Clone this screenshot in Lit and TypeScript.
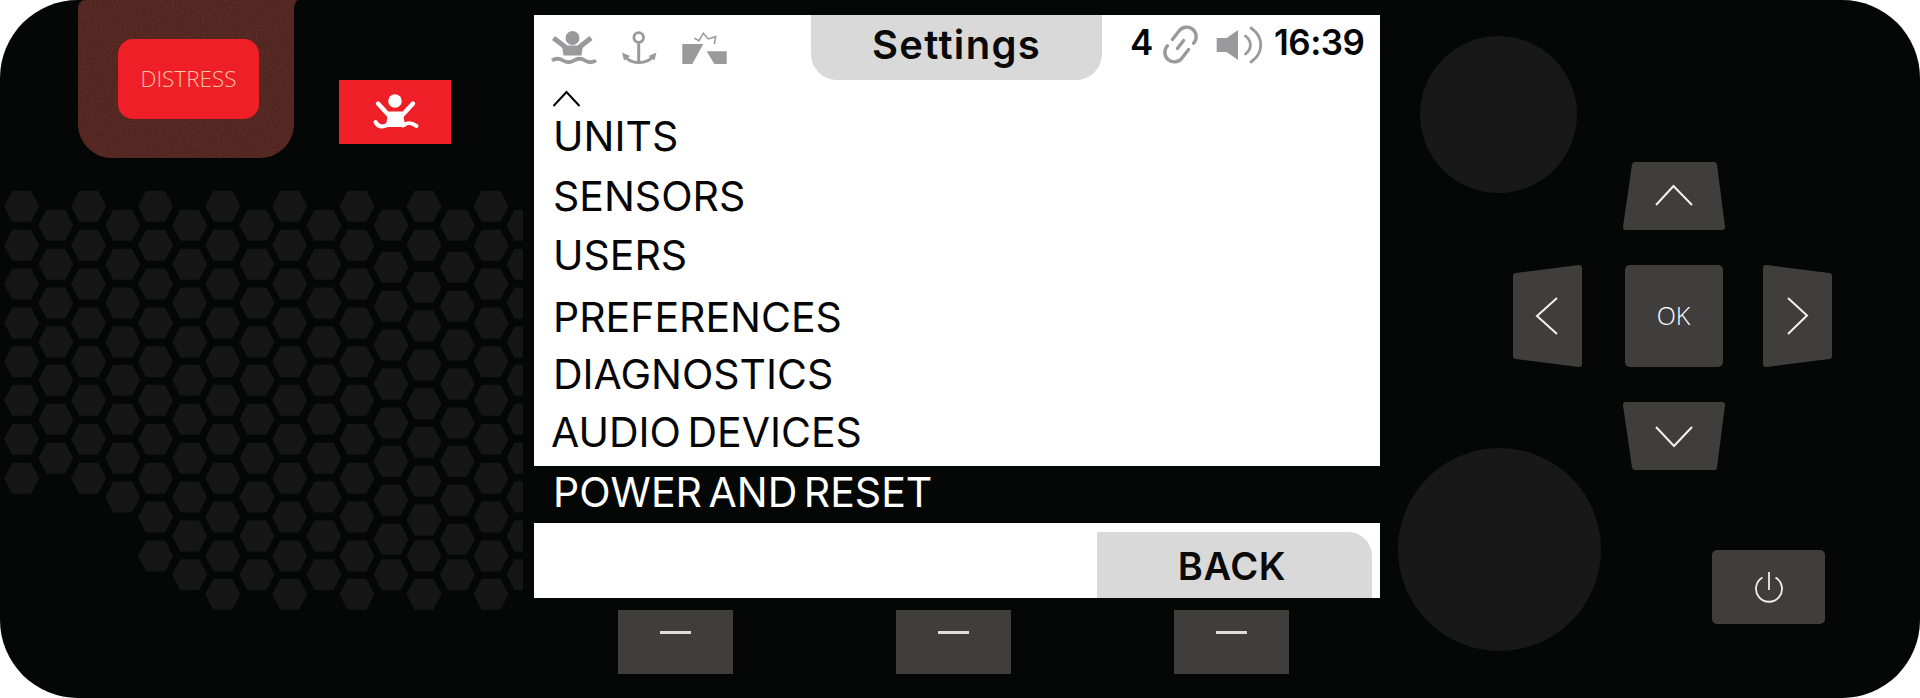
import { LitElement, css, html, svg } from "lit"
import { customElement } from "lit/decorators.js"

// hex grille: column centre x + tops as read from the reference crop (3x, offset 180)
const evenTops = [33, 150, 266, 383, 499, 615, 732, 849, 965, 1082, 1197]
const oddTops = [90, 207, 323, 440, 555, 672, 789, 905, 1022, 1138]
const shiftOdd = [90, 216, 333, 449, 566, 683, 798, 915, 1032, 1138]
const shiftEven = [33, 150, 276, 392, 509, 625, 741, 858, 974, 1081, 1197]

const hexColumns: [number, number[]][] = [
  [21.6, evenTops.slice(0, 8)],
  [55.8, oddTops.slice(0, 7)],
  [88.6, evenTops.slice(0, 8)],
  [122.7, oddTops.slice(0, 8)],
  [155.5, evenTops.slice(0, 10)],
  [189.7, oddTops],
  [222.8, evenTops],
  [257, oddTops],
  [289.7, evenTops],
  [323.9, oddTops],
  [357, evenTops],
  [391, shiftOdd],
  [424, shiftEven],
  [457.4, shiftOdd],
  [491, evenTops],
  [524, oddTops],
]

const hexPoints = (cx: number, top: number) => {
  const cy = (top + 46) / 3
  return [
    [cx - 17.5, cy],
    [cx - 9.4, cy - 15.5],
    [cx + 9.4, cy - 15.5],
    [cx + 17.5, cy],
    [cx + 9.4, cy + 15.5],
    [cx - 9.4, cy + 15.5],
  ]
    .map((p) => p.join(","))
    .join(" ")
}

const menu = [
  { label: "UNITS", shift: -1, indent: 0 },
  { label: "SENSORS", shift: 0, indent: 0 },
  { label: "USERS", shift: 0, indent: 0 },
  { label: "PREFERENCES", shift: 3, indent: 0 },
  { label: "DIAGNOSTICS", shift: 1, indent: 0 },
  { label: "AUDIO DEVICES", shift: -0.5, indent: -2 },
]

@customElement("app-root")
export class AppRoot extends LitElement {
  renderHexes() {
    return html`
      <svg class="grille" viewBox="0 0 523 440">
        ${hexColumns.map(([cx, tops]) =>
          tops.map((t) => svg`<polygon points=${hexPoints(cx, t)} />`)
        )}
      </svg>
    `
  }

  render() {
    return html`
      <div class="panel">
        <section class="left">
          <div class="top-left">
            <div class="tab">
              <svg class="grain">
                <filter id="grain">
                  <feTurbulence type="fractalNoise" baseFrequency="0.55" numOctaves="2" seed="4" />
                  <feColorMatrix values="0 0 0 0 0.13  0 0 0 0 0.04  0 0 0 0 0.03  0 0 0 1.1 -0.35" />
                </filter>
                <rect width="100%" height="100%" filter="url(#grain)" />
              </svg>
              <div class="distress">DISTRESS</div>
            </div>
            <div class="alert">
              <svg viewBox="339 80 112 64">
                <circle cx="395" cy="101" r="6.8" fill="#fff" />
                <path d="M378 103.500 389.500 116M413 103.500 401.500 116" stroke="#fff" stroke-width="4.4" stroke-linecap="round" fill="none" />
                <path d="M388.500 111.500H402.500L405.500 127H385.500Z" fill="#fff" />
                <path d="M375.500 122C378.500 128 384 127 388 124.500M403 125.500C408 121.500 412 123 416.500 126" stroke="#fff" stroke-width="4" stroke-linecap="round" fill="none" />
              </svg>
            </div>
          </div>
          ${this.renderHexes()}
        </section>

        <section class="center">
          <div class="screen">
            <header class="bar">
              <div class="bar-icons">
                <svg class="ico" style="width:48px" viewBox="550 28 48 40">
                  <circle cx="572.500" cy="38" r="7" fill="#9a9a9c" />
                  <path d="M553.500 38 566 47.500M591 38 579 47.500" stroke="#9a9a9c" stroke-width="5" fill="none" />
                  <path d="M562 45.500H583L581.500 55.500H563.500Z" fill="#9a9a9c" />
                  <path d="M552 60.500C556 58 559 58 563 60.500S570 63 574 60.500 581 58 585 60.500 592 63 596 60.500" stroke="#9a9a9c" stroke-width="3.800" fill="none" />
                </svg>
                <svg class="ico" style="width:44px;margin-left:20px" viewBox="618 28 44 40">
                  <circle cx="638.700" cy="37.500" r="4.800" stroke="#9a9a9c" stroke-width="2.800" fill="none" />
                  <path d="M638.700 42V62" stroke="#9a9a9c" stroke-width="3" />
                  <path d="M625 56C628 61 633 62.500 638.700 62.500S650 61 653 56" stroke="#9a9a9c" stroke-width="3" fill="none" />
                  <path d="M622 52.500 630 56 624 60.500ZM656.500 52.500 648.500 56 654.500 60.500Z" fill="#9a9a9c" />
                </svg>
                <svg class="ico" style="width:52px;margin-left:16px" viewBox="678 28 52 40">
                  <path d="M682.300 44H703.300L692.300 64H682.300ZM706.700 51.300H726.700V64H714.300Z" fill="#9a9a9c" />
                  <path d="M694.300 38 699 40.700 703.300 33.300 708.300 39 715.700 36.700 714.300 44" stroke="#9a9a9c" stroke-width="1.500" fill="none" />
                </svg>
              </div>
              <h1 class="title">Settings</h1>
              <div class="status">
                <span class="count">4</span>
                <svg class="ico link" viewBox="1160 24 40 42">
                  <g transform="translate(1180.500 44.500) rotate(-52)" stroke="#9a9a9c" stroke-width="3.400" fill="none" stroke-linecap="round">
                    <path d="M-1-9.500H10A9.500 9.500 0 0 1 10 9.500H9" />
                    <path d="M1 9.500H-10A9.500 9.500 0 0 1-10-9.500H-9" />
                    <path d="M-5 0H5" />
                  </g>
                </svg>
                <svg class="ico speaker" viewBox="1212 24 52 42">
                  <path d="M1216.700 38H1226.700L1238 30V60L1226.700 52H1216.700Z" fill="#9a9a9c" />
                  <path d="M1245.500 36C1252 41 1252 49 1245.500 54" stroke="#9a9a9c" stroke-width="2.800" fill="none" stroke-linecap="round" />
                  <path d="M1251 28C1264 37 1264 53 1251 62" stroke="#9a9a9c" stroke-width="2.800" fill="none" stroke-linecap="round" />
                </svg>
                <span class="time">16:39</span>
              </div>
            </header>
            <svg class="more" viewBox="0 0 30 18">
              <path d="M1.500 16 14.500 2 27.500 16" stroke="#000" stroke-width="2" fill="none" />
            </svg>
            <ul class="list">
              ${menu.map(
                (m) => html`<li style="transform:translate(${m.indent}px,${m.shift}px)">${m.label}</li>`
              )}
            </ul>
          </div>
          <div class="selected">POWER AND RESET</div>
          <div class="foot"><div class="back">BACK</div></div>
          <div class="softkeys">
            <div class="softkey"><span></span></div>
            <div class="softkey"><span></span></div>
            <div class="softkey"><span></span></div>
          </div>
        </section>

        <section class="right">
          <div class="knobs">
            <div class="knob small"></div>
            <div class="knob big"></div>
          </div>
          <div class="controls">
            <div class="dpad">
              <svg class="up" viewBox="1623 162 102 68">
                <polygon class="key" points="1635,165 1714,165 1722,227 1626,227" />
                <polyline class="chev" points="1656,205 1673.500,186 1692,205" />
              </svg>
              <svg class="lf" viewBox="1513 265 69 102">
                <polygon class="key" points="1516,276 1579,268 1579,364 1516,356" />
                <polyline class="chev" points="1557,298 1537,316 1557,334" />
              </svg>
              <div class="ok">OK</div>
              <svg class="rt" viewBox="1763 265 69 102">
                <polygon class="key" points="1766,268 1829,276 1829,356 1766,364" />
                <polyline class="chev" points="1788,298 1807,315.500 1788,334" />
              </svg>
              <svg class="dn" viewBox="1623 402 102 68">
                <polygon class="key" points="1626,405 1722,405 1714,467 1635,467" />
                <polyline class="chev" points="1656,427 1674,446 1692,427" />
              </svg>
            </div>
            <div class="power">
              <svg viewBox="1750 568 38 40">
                <path d="M1762.500 578.500A13 13 0 1 0 1775.500 578.500" stroke="#eee" stroke-width="1.800" fill="none" />
                <path d="M1769 573V591" stroke="#eee" stroke-width="1.800" />
              </svg>
            </div>
          </div>
        </section>
      </div>
    `
  }

  static styles = css`
    :host {
      display: block;
      background: #fff;
    }
    * {
      box-sizing: border-box;
    }
    svg {
      display: block;
    }
    .panel {
      width: 1920px;
      height: 698px;
      border-radius: 78px;
      background: #040706;
      overflow: hidden;
      display: grid;
      grid-template-columns: 534px 846px 540px;
    }

    /* left side */
    .top-left {
      display: flex;
      align-items: flex-start;
    }
    .tab {
      position: relative;
      width: 216px;
      height: 158px;
      margin-left: 78px;
      padding: 39px 0 0 40px;
      background: #50241e;
      border-radius: 8px 0 34px 34px;
    }
    .tab::after {
      content: "";
      position: absolute;
      left: 100%;
      top: 0;
      width: 5px;
      height: 10px;
      background: radial-gradient(ellipse at 100% 100%, transparent 70%, #50241e 72%);
    }
    .grain {
      position: absolute;
      inset: 0;
      width: 100%;
      height: 100%;
      border-radius: inherit;
    }
    .distress {
      position: relative;
      width: 141px;
      height: 80px;
      padding-bottom: 2px;
      border-radius: 15px;
      background: #ee1f26;
      color: #fcc6ac;
      font: 300 22.500px "Open Sans", sans-serif;
      display: flex;
      align-items: center;
      justify-content: center;
    }
    .alert {
      width: 112px;
      height: 64px;
      margin: 80px 0 0 45px;
      background: #ee1f26;
    }
    .grille {
      width: 523px;
      height: 440px;
      margin-top: 22px;
      fill: #161616;
    }

    /* screen */
    .center {
      padding-top: 15px;
      font-family: Inter, sans-serif;
    }
    .screen {
      height: 451px;
      background: #fff;
      color: #060606;
    }
    .bar {
      display: grid;
      grid-template-columns: 277px 291px 278px;
      height: 65px;
    }
    .bar-icons {
      display: flex;
      padding: 13px 0 0 16px;
    }
    .ico {
      height: 40px;
    }
    .title {
      margin: 0;
      background: #d9d9d9;
      border-radius: 0 0 26px 26px;
      font: 600 40px/60px Inter, sans-serif;
      letter-spacing: 1.300px;
      text-align: center;
      color: #0a0a0a;
    }
    .status {
      display: flex;
      align-items: flex-start;
      font: 600 35px/42px Inter, sans-serif;
      padding: 6px 0 0 28px;
    }
    .count {
      width: 30px;
    }
    .status .link {
      width: 40px;
      height: 42px;
      margin-top: 3px;
    }
    .status .speaker {
      width: 52px;
      height: 42px;
      margin: 3px 0 0 12px;
    }
    .time {
      margin-left: 10px;
      letter-spacing: -0.500px;
    }
    .more {
      width: 30px;
      height: 18px;
      margin: 10px 0 0 18px;
    }
    .list {
      list-style: none;
      margin: 0;
      padding: 0 0 0 19px;
      font-size: 41px;
      word-spacing: -5px;
      line-height: 59px;
    }
    .selected {
      height: 57px;
      padding-left: 19px;
      color: #fff;
      font-size: 41px;
      word-spacing: -5px;
      line-height: 52px;
    }
    .foot {
      height: 75px;
      background: #fff;
      display: flex;
      justify-content: flex-end;
      padding: 9px 8px 0 0;
    }
    .back {
      width: 275px;
      padding-right: 5px;
      background: #d9d9d9;
      border-radius: 0 24px 0 0;
      font: 600 38px/68px Inter, sans-serif;
      letter-spacing: 0.600px;
      text-align: center;
      color: #0a0a0a;
    }
    .softkeys {
      display: flex;
      gap: 163px;
      margin: 12px 0 0 84px;
    }
    .softkey {
      width: 115px;
      height: 64px;
      background: #3f3e3c;
      padding-top: 21px;
    }
    .softkey span {
      display: block;
      width: 31px;
      height: 2.500px;
      margin: 0 auto;
      background: #ddd;
    }

    /* right side */
    .right {
      display: grid;
    }
    .right > * {
      grid-area: 1 / 1;
    }
    .knob {
      border-radius: 50%;
      background: #181818;
    }
    .knob.small {
      width: 157px;
      height: 157px;
      margin: 35.500px 0 0 40px;
    }
    .knob.big {
      width: 203px;
      height: 203px;
      margin: 255.500px 0 0 17.500px;
    }
    .dpad {
      display: grid;
      grid-template-columns: 69px 41px 102px 38px 69px;
      grid-template-rows: 68px 102px 68px;
      row-gap: 35px;
      margin: 162px 0 0 133px;
    }
    .up {
      grid-area: 1 / 3;
    }
    .lf {
      grid-area: 2 / 1;
    }
    .rt {
      grid-area: 2 / 5;
    }
    .dn {
      grid-area: 3 / 3;
    }
    .key {
      fill: #3f3e3c;
      stroke: #3f3e3c;
      stroke-width: 6;
      stroke-linejoin: round;
    }
    .chev {
      fill: none;
      stroke: #f2f2f2;
      stroke-width: 2;
    }
    .ok {
      grid-area: 2 / 3;
      width: 98px;
      justify-self: center;
      margin-left: -1px;
      border-radius: 5px;
      background: #3f3e3c;
      color: #fff;
      font: 300 25px/100px "Open Sans", sans-serif;
      text-align: center;
    }
    .power {
      width: 113px;
      height: 74px;
      margin: 80px 0 0 332px;
      border-radius: 5px;
      background: #3f3e3c;
      display: flex;
      align-items: center;
      justify-content: center;
    }
    .power svg {
      width: 38px;
      height: 40px;
    }
  `
}

declare global {
  interface HTMLElementTagNameMap {
    "app-root": AppRoot
  }
}
